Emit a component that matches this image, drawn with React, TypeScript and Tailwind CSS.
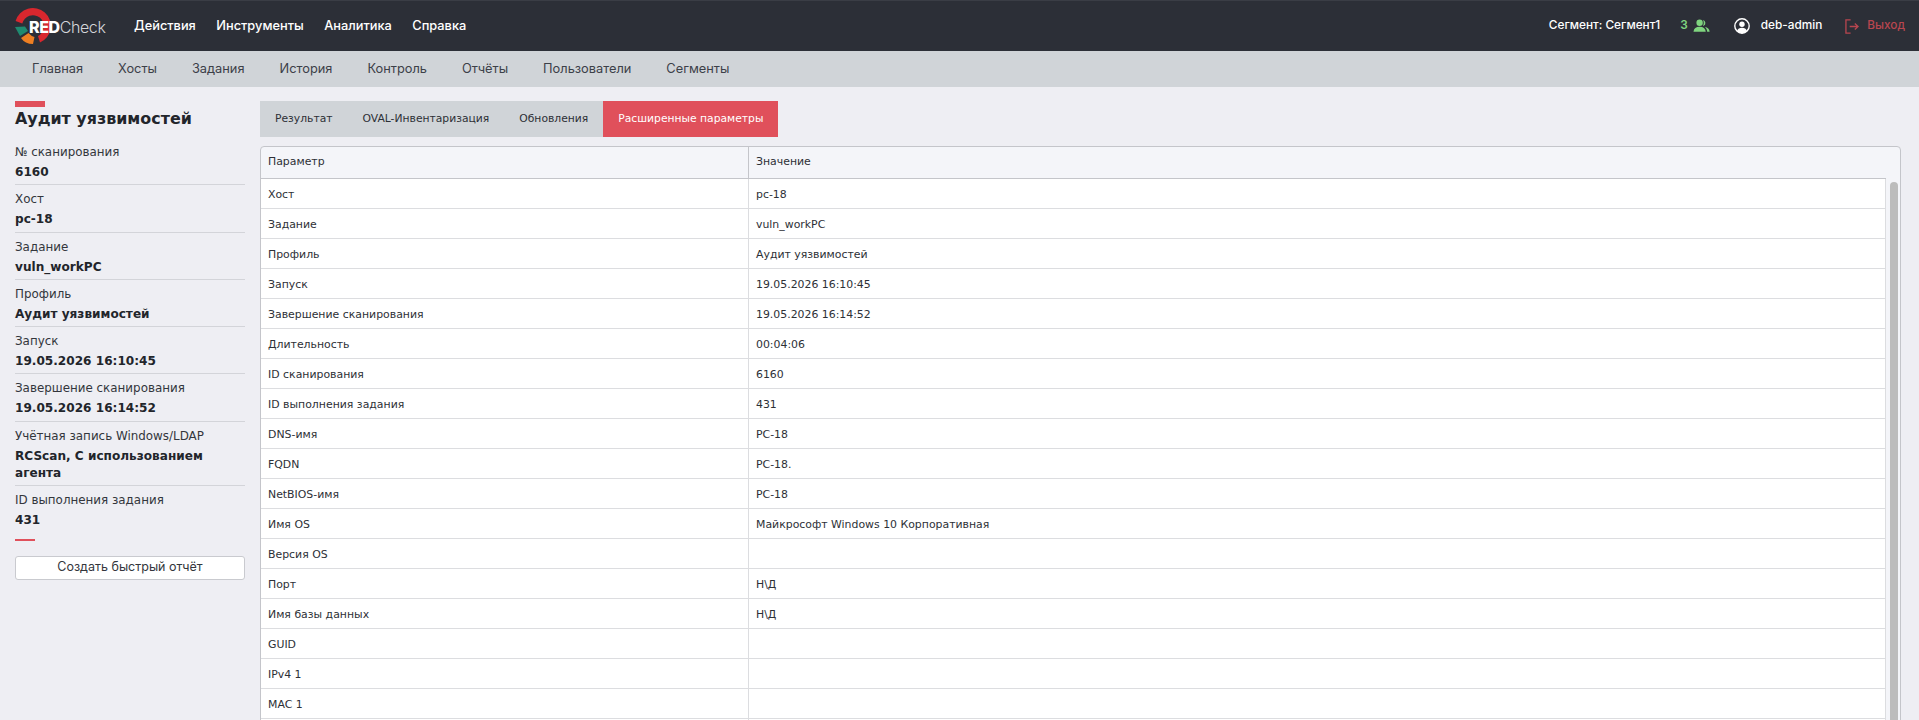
const topMenu = ["Действия", "Инструменты", "Аналитика", "Справка"];
const subMenu = ["Главная", "Хосты", "Задания", "История", "Контроль", "Отчёты", "Пользователи", "Сегменты"];
const tabs = ["Результат", "OVAL-Инвентаризация", "Обновления"];

const info = [
  ["№ сканирования", "6160"],
  ["Хост", "pc-18"],
  ["Задание", "vuln_workPC"],
  ["Профиль", "Аудит уязвимостей"],
  ["Запуск", "19.05.2026 16:10:45"],
  ["Завершение сканирования", "19.05.2026 16:14:52"],
  ["Учётная запись Windows/LDAP", "RCScan, С использованием агента"],
  ["ID выполнения задания", "431"],
];

const rows = [
  ["Хост", "pc-18"],
  ["Задание", "vuln_workPC"],
  ["Профиль", "Аудит уязвимостей"],
  ["Запуск", "19.05.2026 16:10:45"],
  ["Завершение сканирования", "19.05.2026 16:14:52"],
  ["Длительность", "00:04:06"],
  ["ID сканирования", "6160"],
  ["ID выполнения задания", "431"],
  ["DNS-имя", "PC-18"],
  ["FQDN", "PC-18."],
  ["NetBIOS-имя", "PC-18"],
  ["Имя OS", "Майкрософт Windows 10 Корпоративная"],
  ["Версия OS", ""],
  ["Порт", "Н\\Д"],
  ["Имя базы данных", "Н\\Д"],
  ["GUID", ""],
  ["IPv4 1", ""],
  ["MAC 1", ""],
  ["", ""],
];

const Logo = () => (
  <div className="relative w-[92px] h-[40px]">
    <svg width="44" height="40" viewBox="0 0 44 40" className="absolute left-0 top-0">
      {/* red ring */}
      <path d="M0.6 15 A18 18 0 1 1 25 36.6 L23 30 A11 11 0 1 0 7.3 17.5 Z" fill="#d9272e" />
      {/* green piece */}
      <path d="M0 21 L10 20.5 L13 25 L5 30 Z" fill="#1f8a70" />
      {/* orange piece */}
      <path d="M13.5 27 Q16 30 19.5 31 L18 38 Q10 38 6 32 Z" fill="#ee7f22" />
    </svg>
    <div className="absolute left-[14px] top-[9px] flex items-baseline font-['Inter',sans-serif] text-[16px] leading-[24px] tracking-[-0.4px]">
      <span className="font-extrabold text-white">RED</span>
      <span className="font-light text-[#d5d6d9]">Check</span>
    </div>
  </div>
);

const App = () => {
  return (
    <div className="h-[720px] overflow-hidden bg-[#eeeef3] font-['Inter',sans-serif]">
      {/* top bar */}
      <header className="h-[51px] bg-[#2c2f37] border-t border-t-[#3a3d45] flex items-center pl-[15px] pr-[14px] text-white">
        <Logo />
        <nav className="flex gap-[20.5px] ml-[27px] text-[12.8px] font-medium">
          {topMenu.map((m) => (
            <span key={m}>{m}</span>
          ))}
        </nav>
        <div className="ml-auto flex items-center text-[11.8px] font-medium">
          <span>Сегмент: Сегмент1</span>
          <span className="ml-[20px] text-[#7fd47f] font-semibold">3</span>
          <svg width="17" height="14" viewBox="0 0 18 14" fill="#7fd47f" className="ml-[5px]">
            <circle cx="7" cy="3.6" r="3.4" />
            <path d="M0.5 13 C0.8 9.5 3.2 7.8 7 7.8 C10.8 7.8 13.2 9.5 13.5 13 Z" />
            <path d="M10.6 0.6 A3.3 3.3 0 0 1 11.2 6.8 C10.9 7 10.9 7 10.6 6.7 C11.6 5.3 11.7 2.4 10.6 0.6 Z" />
            <path d="M12.6 8 C15.6 8.3 17.3 10 17.6 13 L15 13 C14.9 11 14 9.3 12.6 8 Z" />
          </svg>
          <svg width="16" height="16" viewBox="0 0 16 16" className="ml-[24px]">
            <circle cx="8" cy="8" r="7.2" fill="none" stroke="#fff" strokeWidth="1.4" />
            <circle cx="8" cy="6.2" r="2.7" fill="#fff" />
            <path d="M3 13 C3.8 10.6 5.6 9.8 8 9.8 C10.4 9.8 12.2 10.6 13 13 C11.6 14.6 9.8 15.2 8 15.2 C6.2 15.2 4.4 14.6 3 13 Z" fill="#fff" />
          </svg>
          <span className="ml-[11px]">deb-admin</span>
          <svg width="14" height="15" viewBox="0 0 15 16" fill="none" stroke="#b8464f" strokeWidth="1.4" className="ml-[23px]">
            <path d="M6 1 H1 V15 H6" />
            <path d="M5 8 H14 M10.5 4.8 L14 8 L10.5 11.2" />
          </svg>
          <span className="ml-[8px] text-[#b8464f]">Выход</span>
        </div>
      </header>

      {/* second menu */}
      <nav className="h-[36px] bg-[#d0d4d8] flex items-center gap-[35px] pl-[32px] text-[12.8px] text-[#3c4048]">
        {subMenu.map((m) => (
          <span key={m}>{m}</span>
        ))}
      </nav>

      <div className="flex pt-[14px] font-['DejaVu_Sans',sans-serif]">
        {/* left panel */}
        <aside className="w-[260px] shrink-0 pl-[15px] pr-[15px] text-[#22252b]">
          <div className="w-[30px] h-[6px] bg-[#e0505b]" />
          <h1 className="text-[15.9px] leading-[20px] mt-[2px] font-bold">Аудит уязвимостей</h1>
          <div className="mt-[9px]">
            {info.map(([label, value], i) => (
              <div
                key={label}
                className={i < info.length - 1 ? "border-b border-[#d3d4d9] pb-[3.25px] pt-[4px]" : "pt-[4px]"}
              >
                <div className="text-[11.9px] leading-[20px] text-[#33363c]">{label}</div>
                <div className="text-[12.1px] leading-[17px] mt-[2px] font-bold">{value}</div>
              </div>
            ))}
          </div>
          <div className="w-[20px] h-[2px] bg-[#e0505b] mt-[10px]" />
          <button className="mt-[15px] w-full h-[24px] bg-white border border-[#c9cacf] rounded-[3px] font-['Inter',sans-serif] text-[12.5px] text-[#33363c]">
            Создать быстрый отчёт
          </button>
        </aside>

        {/* right part */}
        <main className="flex-1 min-w-0 pr-[18px]">
          <div className="flex w-fit h-[36px] bg-[#d0d4d8] text-[10.75px] text-[#2d3036]">
            {tabs.map((t) => (
              <div key={t} className="flex items-center px-[15px]">
                {t}
              </div>
            ))}
            <div className="flex items-center px-[15px] bg-[#e0505b] text-white">Расширенные параметры</div>
          </div>

          <div className="mt-[9px] border border-[#c4c5ca] rounded-t-[4px] bg-[#f4f5f9] text-[10.9px] text-[#2d3036]">
            <div className="flex h-[32px] border-b border-[#c4c5ca] mr-[14px]">
              <div className="w-[488px] flex items-center pl-[7px] border-r border-[#c4c5ca]">Параметр</div>
              <div className="flex items-center pl-[7px]">Значение</div>
            </div>
            <div className="relative">
              <div className="mr-[14px] bg-white border-r border-[#dcdde0]">
                {rows.map(([p, v], i) => (
                  <div key={i} className="flex h-[30px] border-b border-[#dcdde0]">
                    <div className="w-[488px] flex items-center pl-[7px] pt-[4px] border-r border-[#dcdde0]">{p}</div>
                    <div className="flex items-center pl-[7px] pt-[4px]">{v}</div>
                  </div>
                ))}
              </div>
              {/* scrollbar thumb */}
              <div className="absolute right-[2px] top-[3px] bottom-0 w-[8px] rounded-t-full bg-[#bcbcbc]" />
            </div>
          </div>
        </main>
      </div>
    </div>
  );
};

export default App;
